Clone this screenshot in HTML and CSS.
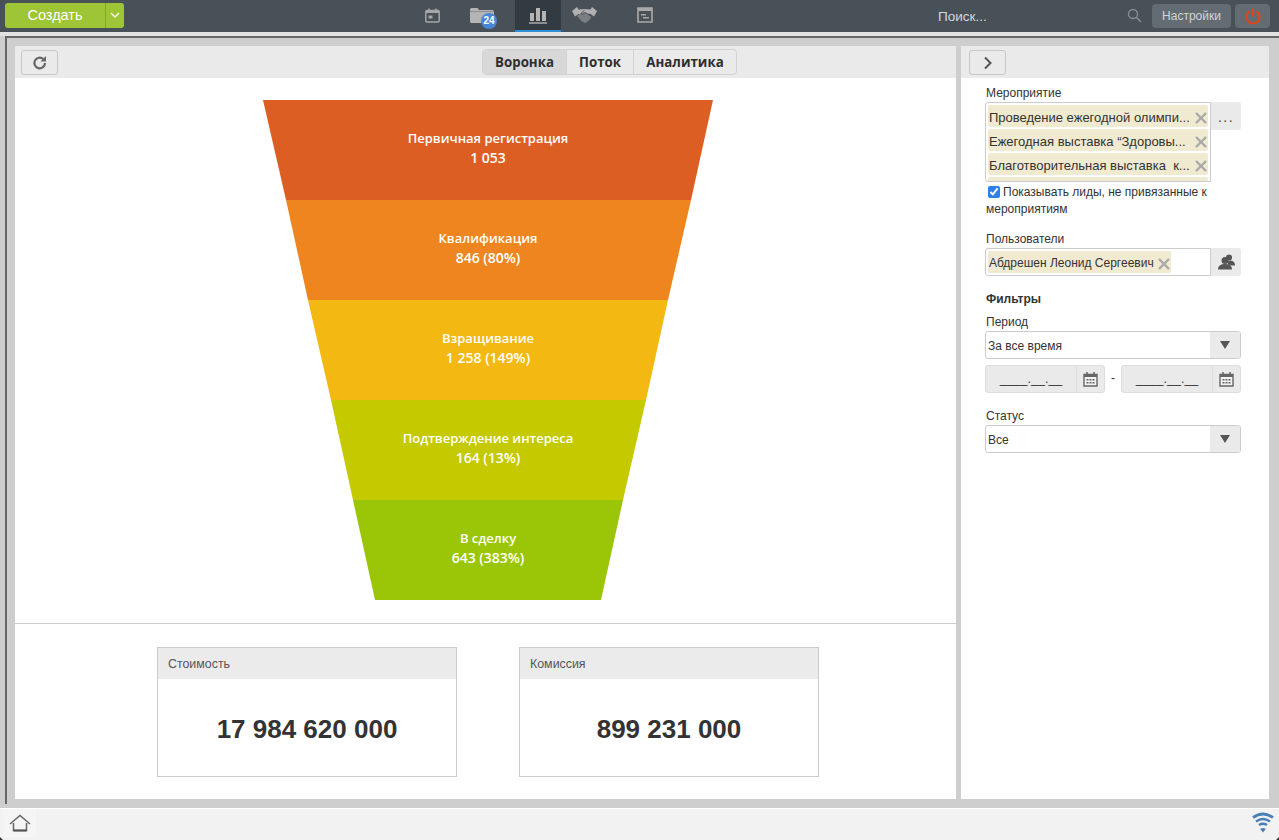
FILE: index.html
```html
<!DOCTYPE html>
<html lang="ru">
<head>
<meta charset="utf-8">
<title>Воронка</title>
<link rel="stylesheet" href="styles.css">
</head>
<body>
<svg class="defs" width="0" height="0" aria-hidden="true">
  <symbol id="x" viewBox="0 0 12 12"><path d="M1 1l10 10M11 1L1 11" fill="none" stroke="currentColor" stroke-width="2.400"/></symbol>
  <symbol id="tri" viewBox="0 0 10 8"><path d="M0 0h10L5 8z" fill="currentColor"/></symbol>
  <symbol id="cal" viewBox="0 0 15 16"><path d="M1 3.500h13v11.500H1z" fill="#f1f1f1" stroke="#666" stroke-width="1.400"/><path d="M1 3h13v3H1z" fill="#666"/><path d="M4 1v3M11 1v3" stroke="#666" stroke-width="1.500"/><path d="M3.500 8h2v1.500h-2zM6.500 8h2v1.500h-2zM9.500 8h2v1.500h-2zM3.500 11h2v1.500h-2zM6.500 11h2v1.500h-2zM9.500 11h2v1.500h-2z" fill="#666"/></symbol>
</svg>
<div class="app">
  <header class="topbar">
    <div class="create">
      <span class="create-main">Создать</span>
      <span class="create-caret"><svg width="10" height="7" viewBox="0 0 10 7"><path d="M1 1l4 4 4-4" fill="none" stroke="#fff" stroke-width="1.300"/></svg></span>
    </div>
    <nav class="nav">
      <span class="nav-item w46">
        <svg width="15" height="15" viewBox="0 0 15 15"><path d="M2 2.500h11q1.200 0 1.200 1.200v9.100q0 1.200-1.200 1.200H2Q.8 14 .8 12.800V3.700Q.8 2.500 2 2.500z" fill="none" stroke="#a6a6a6" stroke-width="1.500"/><path d="M1 2.500h13V5H1z" fill="#a6a6a6"/><path d="M4 0.500v3M11 0.500v3" stroke="#a6a6a6" stroke-width="1.500"/><path d="M3.500 7.500h4v3h-4z" fill="#a6a6a6"/></svg>
      </span>
      <span class="nav-item w60 folder">
        <svg width="24" height="15" viewBox="0 0 24 15"><path d="M0 1.500q0-1.500 1.500-1.500h6l1.500 2h13.500q1.500 0 1.500 1.500V13.500q0 1.500-1.500 1.500H1.500Q0 15 0 13.500z" fill="#b4b4b4"/><path d="M0 3.500h24" stroke="#7d8285" stroke-width=".7"/></svg>
        <span class="badge">24</span>
      </span>
      <span class="nav-item w46 active">
        <svg width="18" height="17" viewBox="0 0 18 17"><path d="M1 6h4v8H1zM7 1h4v13H7zM13 4h4v10h-4z" fill="#b4b4b4"/><path d="M0 16h18" stroke="#b4b4b4" stroke-width="1.400"/></svg>
      </span>
      <span class="nav-item w64 shake">
        <svg width="25" height="16" viewBox="0 0 25 16"><path d="M0 4L5 0l3.500 5.500L3 9.500z" fill="#b0b0b0"/><path d="M25 4L20 0l-3.500 5.500L22 9.500z" fill="#b0b0b0"/><path d="M7 2.500l5.500-.5 5.500.5 2 3-3 1.500-5-1.500-4 2-2-1z" fill="#b0b0b0"/><path d="M5 9l3.500-2.500L12.500 5.500l7 4-1.500 3-3 2.500-2 1-3-1.500z" fill="#7b7f82"/><path d="M12.500 3L9 6.500l1.500 1 3-2 5.500 4" fill="none" stroke="#495158" stroke-width=".9"/></svg>
      </span>
      <span class="nav-item w40">
        <svg width="16" height="16" viewBox="0 0 16 16"><path d="M1 1h14v14H1z" fill="none" stroke="#a9a9a9" stroke-width="1.600"/><path d="M1 1h14v3H1z" fill="#a9a9a9"/><path d="M4 7h5v1.500H4zM6 10h6v1.500H6z" fill="#a9a9a9"/></svg>
      </span>
    </nav>
    <span class="search-text">Поиск...</span>
    <div class="top-right">
      <svg class="search-icon" width="15" height="15" viewBox="0 0 15 15"><circle cx="6" cy="6" r="4.500" fill="none" stroke="#858c91" stroke-width="1.400"/><path d="M9.500 9.500l4.500 4.500" stroke="#858c91" stroke-width="1.600"/></svg>
      <span class="top-btn settings">Настройки</span>
      <span class="top-btn power"><svg width="16" height="17" viewBox="0 0 16 17"><path d="M4.500 3.500a6.500 6.500 0 1 0 7 0" fill="none" stroke="#e0441a" stroke-width="2.200"/><path d="M8 0.500v8" stroke="#e0441a" stroke-width="2.200"/></svg></span>
    </div>
  </header>
  <div class="strip"></div>
  <div class="workspace">
    <div class="frame">
      <main class="panel left">
        <div class="toolbar">
          <span class="tool-btn"><svg width="16" height="16" viewBox="0 0 16 16"><path d="M13 8a5.300 5.300 0 1 1-1.700-3.900" fill="none" stroke="#666" stroke-width="2.200"/><path d="M14 1v5.500H8.500z" fill="#666"/></svg></span>
          <div class="tabs">
            <span class="tab selected t1">Воронка</span>
            <span class="tab t2">Поток</span>
            <span class="tab t3">Аналитика</span>
          </div>
        </div>
        <div class="funnel">
          <div class="band b1"><span>Первичная регистрация</span><span class="count">1 053</span></div>
          <div class="band b2"><span>Квалификация</span><span class="count">846 (80%)</span></div>
          <div class="band b3"><span>Взращивание</span><span class="count">1 258 (149%)</span></div>
          <div class="band b4"><span>Подтверждение интереса</span><span class="count">164 (13%)</span></div>
          <div class="band b5"><span>В сделку</span><span class="count">643 (383%)</span></div>
        </div>
        <div class="cards">
          <section class="card"><h3 class="card-head">Стоимость</h3><div class="card-value">17 984 620 000</div></section>
          <section class="card"><h3 class="card-head">Комиссия</h3><div class="card-value">899 231 000</div></section>
        </div>
      </main>
      <aside class="panel right">
        <div class="toolbar">
          <span class="tool-btn"><svg width="10" height="14" viewBox="0 0 10 14"><path d="M2 1.500l5.500 5.500L2 12.500" fill="none" stroke="#555" stroke-width="2"/></svg></span>
        </div>
        <div class="form">
          <div class="label first">Мероприятие</div>
          <div class="picker">
            <div class="tagbox events">
              <div class="tag wide"><span class="tag-text">Проведение ежегодной олимпи...</span><svg class="tag-x" width="12" height="12"><use href="#x"/></svg></div>
              <div class="tag wide"><span class="tag-text">Ежегодная выставка “Здоровы...</span><svg class="tag-x" width="12" height="12"><use href="#x"/></svg></div>
              <div class="tag wide"><span class="tag-text">Благотворительная выставка &nbsp;к...</span><svg class="tag-x" width="12" height="12"><use href="#x"/></svg></div>
              <div class="tag wide"></div>
            </div>
            <span class="side-btn dots">...</span>
          </div>
          <label class="check"><input type="checkbox" checked>Показывать лиды, не привязанные к мероприятиям</label>
          <div class="label users">Пользователи</div>
          <div class="picker">
            <div class="tagbox single">
              <div class="tag"><span class="tag-text">Абдрешен Леонид Сергеевич</span><svg class="tag-x" width="12" height="12"><use href="#x"/></svg></div>
            </div>
            <span class="side-btn"><svg width="17" height="16" viewBox="0 0 17 16"><circle cx="11" cy="3.500" r="3" fill="#555"/><path d="M9 8q1-1.500 3.500-1.500Q17 7 17 11.500h-6z" fill="#555"/><circle cx="7" cy="6.500" r="3.500" fill="#555"/><path d="M0 15.500q0-5.500 7-5.500t7 5.500z" fill="#555"/></svg></span>
          </div>
          <div class="heading">Фильтры</div>
          <div class="label period">Период</div>
          <div class="select"><span class="select-text">За все время</span><span class="select-arrow"><svg width="10" height="8"><use href="#tri"/></svg></span></div>
          <div class="dates">
            <div class="date"><span class="date-text">____.__.__</span><span class="date-icon"><svg width="15" height="16"><use href="#cal"/></svg></span></div>
            <span class="dash">-</span>
            <div class="date"><span class="date-text">____.__.__</span><span class="date-icon"><svg width="15" height="16"><use href="#cal"/></svg></span></div>
          </div>
          <div class="label status">Статус</div>
          <div class="select"><span class="select-text">Все</span><span class="select-arrow"><svg width="10" height="8"><use href="#tri"/></svg></span></div>
        </div>
      </aside>
    </div>
  </div>
  <footer class="footer">
    <span class="home"><svg width="22" height="19" viewBox="0 0 22 19"><path d="M1 10L11 1.500 21 10" fill="none" stroke="#666" stroke-width="1.500"/><path d="M4.500 9v7.500h13V9" fill="none" stroke="#666" stroke-width="1.500"/><path d="M4.500 16.500h13" stroke="#555" stroke-width="2"/></svg></span>
    <span class="wifi"><svg width="22" height="21" viewBox="0 0 22 21"><path d="M1 5.500Q11-1.500 21 5.500" fill="none" stroke="#4a7fb5" stroke-width="2.800"/><path d="M4 9.500Q11 4.500 18 9.500" fill="none" stroke="#4a7fb5" stroke-width="2.500"/><path d="M7 13Q11 10.500 15 13" fill="none" stroke="#4a7fb5" stroke-width="2.300"/><path d="M11 20.500l-2.800-3.500q2.800-1.800 5.600 0z" fill="#4a7fb5"/></svg></span>
  </footer>
</div>
</body>
</html>
```

FILE: styles.css
```css
* { box-sizing: border-box; }
html, body { margin: 0; padding: 0; }
body { font-family: "Liberation Sans", Arial, sans-serif; font-size: 12px; color: #333; background: #cecece; overflow: hidden; }
.defs { display: block; height: 0; }
.app { width: 1279px; height: 840px; display: flex; flex-direction: column; }

.topbar { height: 32px; flex: none; background: #495158; display: flex; align-items: flex-start; padding: 0 9px 0 5px; }
.create { display: flex; margin-top: 3px; height: 25px; }
.create-main { width: 100px; background: #9ec535; color: #fff; font-size: 14.500px; line-height: 25px; text-align: center; border-radius: 3px 0 0 3px; }
.create-caret { width: 19px; background: #9ec535; border-left: 1px solid #83a92a; border-radius: 0 3px 3px 0; display: flex; align-items: center; justify-content: center; }
.nav { display: flex; margin-left: 285px; height: 32px; }
.nav-item { height: 32px; display: flex; align-items: center; justify-content: center; position: relative; padding-bottom: 2px; }
.w46 { width: 46px; }
.w60 { width: 60px; }
.w64 { width: 64px; }
.w40 { width: 40px; }
.folder { justify-content: flex-start; padding-left: 15px; }
.shake { justify-content: flex-start; padding-left: 11px; }
.active { background: #333b42; border-bottom: 2px solid #2f8ed6; padding-bottom: 0; }
.badge { position: absolute; left: 26px; top: 13px; width: 16px; height: 16px; border-radius: 50%; background: #4a86d6; color: #fff; font-size: 10px; font-weight: bold; line-height: 16px; text-align: center; }
.search-text { margin-left: 273px; margin-top: 9px; font-size: 13.500px; line-height: 15px; color: #d4d8db; }
.top-right { margin-left: auto; display: flex; align-items: flex-start; }
.search-icon { margin-top: 8px; margin-right: 10px; }
.top-btn { height: 24px; margin-top: 4px; background: #636c73; border-radius: 4px; color: #d2d5d8; line-height: 24px; text-align: center; font-size: 12px; display: flex; align-items: center; justify-content: center; }
.settings { width: 79px; }
.power { width: 35px; margin-left: 4px; }

.strip { height: 4px; flex: none; background: #e2e2e2; }
.workspace { flex: 1; min-height: 0; background: #cecece; padding: 0 0 4px 5px; display: flex; }
.frame { flex: 1; min-width: 0; border-top: 2px solid #666; border-left: 2px solid #666; padding: 8px 10px 5px 8px; display: flex; gap: 5px; }
.panel { background: #fff; display: flex; flex-direction: column; }
.left { width: 941px; }
.right { width: 308px; }

.toolbar { height: 32px; flex: none; background: #eaeaea; display: flex; align-items: flex-start; padding: 3px 0 0 6px; }
.right .toolbar { padding-left: 8px; }
.tool-btn { width: 37px; height: 25px; margin-top: 1px; border: 1px solid #c8c8c8; border-radius: 3px; display: flex; align-items: center; justify-content: center; }
.tabs { display: flex; height: 26px; margin-left: 424px; border: 1px solid #d2d2d2; border-radius: 4px; overflow: hidden; }
.tab { font-family: "Open Sans", sans-serif; font-weight: 700; font-size: 13.300px; color: #2e2e2e; line-height: 24px; text-align: center; border-left: 1px solid #d2d2d2; }
.tab.t1 { width: 83px; border-left: 0; }
.tab.t2 { width: 67px; }
.tab.t3 { width: 103px; }
.selected { background: #d8d8d8; }

.funnel { margin: 22px 0 0 248px; width: 450px; flex: none; }
.band { height: 100px; padding-top: 28px; display: flex; flex-direction: column; align-items: center; color: #fff; font-family: "Open Sans", sans-serif; font-weight: 600; font-size: 13px; line-height: 20px; }
.count { font-size: 14px; }
.b1 { background: #dd5e23; clip-path: polygon(0 0, 450px 0, 428px 100%, 23px 100%); }
.b2 { background: #ee851e; clip-path: polygon(23px 0, 428px 0, 405px 100%, 45px 100%); }
.b3 { background: #f3b812; clip-path: polygon(45px 0, 405px 0, 383px 100%, 68px 100%); }
.b4 { background: #c4c900; clip-path: polygon(68px 0, 383px 0, 360px 100%, 90px 100%); }
.b5 { background: #9bc608; clip-path: polygon(90px 0, 360px 0, 338px 100%, 112px 100%); }

.cards { margin-top: 23px; border-top: 1px solid #ccc; padding: 23px 0 0 142px; display: flex; gap: 62px; }
.card { width: 300px; height: 130px; border: 1px solid #ccc; }
.card-head { margin: 0; height: 31px; background: #ebebeb; padding-left: 10px; font-size: 12.400px; font-weight: normal; line-height: 32px; color: #555; }
.card-value { text-align: center; font-size: 26px; font-weight: bold; color: #333; line-height: 30px; padding-top: 35px; }

.form { padding: 0 28px 0 24px; display: flex; flex-direction: column; }
.label { font-size: 12px; line-height: 15px; color: #333; padding-left: 1px; }
.label.first { margin-top: 8px; }
.picker { display: flex; align-items: flex-start; margin-top: 1px; }
.tagbox { width: 226px; border: 1px solid #ccc; border-radius: 3px 0 0 3px; padding: 2px; overflow: hidden; background: #fff; }
.tagbox.events { height: 80px; }
.tagbox.single { height: 28px; }
.tag { display: inline-flex; align-items: center; height: 22px; background: #f0ead0; color: #333; padding: 4px 1px 0; border-radius: 2px; vertical-align: top; }
.tag.wide { display: flex; width: 220px; margin-bottom: 2px; }
.wide .tag-text { font-size: 13px; }
.tag-text { font-size: 12px; white-space: pre; margin-top: -2px; }
.tag-x { color: #a9a9a9; margin-left: auto; flex: none; }
.single .tag-x { margin-left: 4px; margin-right: 0; }
.side-btn { width: 30px; height: 28px; background: #eaeaea; border-radius: 0 3px 3px 0; display: flex; align-items: center; justify-content: center; color: #444; }
.dots { font-size: 14px; line-height: 30px; align-items: flex-start; letter-spacing: 1.500px; }
.check { display: block; margin-top: 2px; line-height: 17px; font-size: 12px; color: #333; width: 226px; padding-left: 1px; }
.check input { width: 12px; height: 12px; margin: 0 3px 0 2px; accent-color: #2f7fe8; vertical-align: -2px; }
.label.users { margin-top: 14px; }
.heading { font-weight: bold; font-size: 12px; line-height: 15px; margin-top: 16px; padding-left: 1px; color: #333; }
.label.period { margin-top: 8px; }
.select { display: flex; height: 28px; margin-top: 1px; width: 256px; border: 1px solid #ccc; border-radius: 3px; overflow: hidden; background: #fff; }
.select-text { flex: 1; padding-left: 2px; line-height: 29px; font-size: 12px; }
.select-arrow { width: 30px; background: #eaeaea; color: #555; display: flex; align-items: center; justify-content: center; }
.dates { display: flex; align-items: flex-start; margin-top: 6px; width: 256px; }
.date { display: flex; width: 120px; height: 28px; background: #eaeaea; border: 1px solid #ddd; border-radius: 3px; }
.date-text { width: 90px; text-align: center; font-size: 12.500px; line-height: 27px; color: #333; }
.date-icon { flex: 1; border-left: 1px solid #ddd; display: flex; align-items: center; justify-content: center; }
.dash { width: 16px; text-align: center; line-height: 26px; font-size: 12px; }
.label.status { margin-top: 16px; }

.footer { height: 32px; flex: none; background: #f2f2f2; border-top: 1px solid #fff; display: flex; justify-content: space-between; align-items: flex-start; position: relative; }
.footer::before { content: ""; position: absolute; left: 0; bottom: 0; border-style: solid; border-width: 3px 0 0 3px; border-color: transparent transparent transparent #333; }
.footer::after { content: ""; position: absolute; right: 0; bottom: 0; border-style: solid; border-width: 0 0 3px 3px; border-color: transparent transparent #333 transparent; }
.home { width: 33px; height: 28px; margin-left: 3px; background: #f5f5f5; display: flex; align-items: center; justify-content: center; }
.wifi { margin-right: 5px; margin-top: 3px; }
```
